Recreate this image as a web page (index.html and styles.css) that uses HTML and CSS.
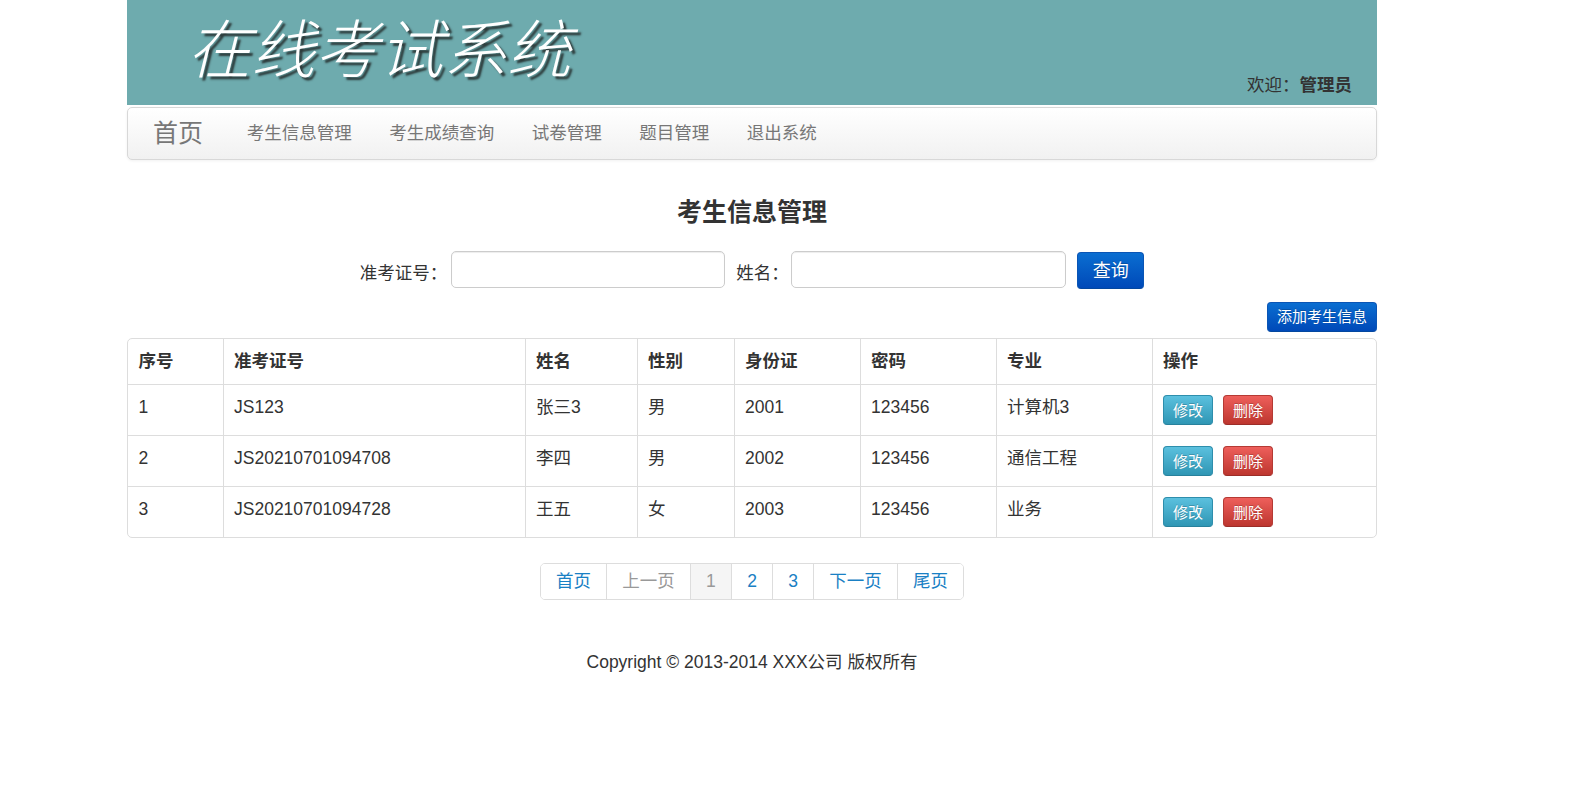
FILE: index.html
```html
<!DOCTYPE html>
<html lang="zh-CN">
<head>
<meta charset="utf-8">
<title>在线考试系统</title>
<link rel="stylesheet" href="styles.css">
</head>
<body>
<div class="page">
  <header class="banner">
    <div class="logo">在线考试系统</div>
    <div class="welcome">欢迎：<b>管理员</b></div>
  </header>
  <nav class="navbar">
    <a class="brand">首页</a>
    <ul class="nav-list">
      <li><a>考生信息管理</a></li>
      <li><a>考生成绩查询</a></li>
      <li><a>试卷管理</a></li>
      <li><a>题目管理</a></li>
      <li><a>退出系统</a></li>
    </ul>
  </nav>
  <h3 class="title">考生信息管理</h3>
  <form class="search">
    <label class="label label-first">准考证号：</label>
    <input class="field" type="text">
    <label class="label label-second">姓名：</label>
    <input class="field field-second" type="text">
    <button class="btn btn-primary btn-query" type="button">查询</button>
  </form>
  <div class="actions">
    <button class="btn btn-primary btn-add" type="button">添加考生信息</button>
  </div>
  <div class="table-wrap">
    <table class="data">
      <thead>
        <tr><th>序号</th><th>准考证号</th><th>姓名</th><th>性别</th><th>身份证</th><th>密码</th><th>专业</th><th>操作</th></tr>
      </thead>
      <tbody>
        <tr><td>1</td><td>JS123</td><td>张三3</td><td>男</td><td>2001</td><td>123456</td><td>计算机3</td><td class="ops"><button class="btn btn-xs btn-info" type="button">修改</button><button class="btn btn-xs btn-danger" type="button">删除</button></td></tr>
        <tr><td>2</td><td>JS20210701094708</td><td>李四</td><td>男</td><td>2002</td><td>123456</td><td>通信工程</td><td class="ops"><button class="btn btn-xs btn-info" type="button">修改</button><button class="btn btn-xs btn-danger" type="button">删除</button></td></tr>
        <tr><td>3</td><td>JS20210701094728</td><td>王五</td><td>女</td><td>2003</td><td>123456</td><td>业务</td><td class="ops"><button class="btn btn-xs btn-info" type="button">修改</button><button class="btn btn-xs btn-danger" type="button">删除</button></td></tr>
      </tbody>
    </table>
  </div>
  <div class="pager-row">
    <ul class="pagination">
      <li><a>首页</a></li>
      <li class="disabled"><a>上一页</a></li>
      <li class="active"><a>1</a></li>
      <li><a>2</a></li>
      <li><a>3</a></li>
      <li><a>下一页</a></li>
      <li><a>尾页</a></li>
    </ul>
  </div>
  <footer class="footer">Copyright © 2013-2014 XXX公司 版权所有</footer>
</div>
</body>
</html>
```
FILE: styles.css
```css
* { box-sizing: border-box; }
html, body { margin: 0; padding: 0; background: #fff; }
body {
  font-family: "Liberation Sans", "Noto Sans CJK SC", sans-serif;
  font-size: 17.5px;
  line-height: 25px;
  color: #333;
}
.page { width: 1250px; margin-left: 127px; }

.banner {
  height: 105px;
  background: #6eabae;
  display: flex;
  justify-content: space-between;
  align-items: flex-end;
  padding: 0 25px 7px 60px;
}
.logo {
  align-self: flex-start;
  margin-top: 10px;
  font-size: 64px;
  line-height: 82px;
  font-weight: 300;
  font-style: italic;
  color: #fff;
  text-shadow: 3px 3px 2px #2c3a3a;
  white-space: nowrap;
}
.welcome b { font-weight: 700; }

.navbar {
  margin-top: 2px;
  height: 53px;
  display: flex;
  align-items: center;
  border: 1px solid #d8d8d8;
  border-radius: 5px;
  background: linear-gradient(to bottom, #fff 0%, #f1f1f1 100%);
  box-shadow: 0 1px 3px rgba(0,0,0,.06);
}
.brand {
  font-size: 25px;
  color: #777;
  padding: 0 25px 0 25px;
}
.nav-list { display: flex; list-style: none; margin: 0; padding: 0; }
.nav-list a { display: block; padding: 0 18.75px; color: #777; }

.title {
  margin: 37px 0 0;
  font-size: 25px;
  line-height: 30px;
  font-weight: 700;
  text-align: center;
}

.search {
  margin-top: 24px;
  display: flex;
  justify-content: center;
  align-items: flex-start;
}
.label { padding-top: 10px; }
.label-first { padding-right: 1px; }
.label-second { margin-left: 11px; }
.field {
  width: 274.5px;
  height: 37px;
  margin-left: 2.5px;
  border: 1px solid #ccc;
  border-radius: 5px;
  background: #fff;
  box-shadow: inset 0 1px 1px rgba(0,0,0,.075);
}
.field-second { width: 275px; }
.btn {
  font-family: inherit;
  color: #fff;
  border: 1px solid transparent;
  border-radius: 4px;
  padding: 0;
  text-shadow: 0 -1px 0 rgba(0,0,0,.2);
}
.btn-primary {
  background: linear-gradient(to bottom, #0a6ed1 0%, #0049b8 100%);
  border-color: #0a55b5 #0a55b5 #04479f;
}
.btn-query {
  width: 67px;
  height: 37px;
  margin: 1px 0 0 11px;
  padding-bottom: 4px;
  font-size: 18px;
}
.actions { margin-top: 13px; display: flex; justify-content: flex-end; }
.btn-add { width: 110px; height: 30px; padding-bottom: 3px; font-size: 15px; }

.table-wrap {
  margin-top: 6px;
  border: 1px solid #ddd;
  border-radius: 5px;
  overflow: hidden;
}
.data { width: 100%; border-collapse: collapse; table-layout: fixed; }
.data th, .data td {
  padding: 10px 10px 10px 10.5px;
  text-align: left;
  vertical-align: top;
  border-left: 1px solid #ddd;
  border-top: 1px solid #ddd;
}
.data th { border-top: 0; font-weight: 700; }
.data th:first-child, .data td:first-child { border-left: 0; }
.data th:nth-child(1) { width: 95px; }
.data th:nth-child(2) { width: 302px; }
.data th:nth-child(3) { width: 112px; }
.data th:nth-child(4) { width: 97px; }
.data th:nth-child(5) { width: 126px; }
.data th:nth-child(6) { width: 136px; }
.data th:nth-child(7) { width: 156px; }
.btn-xs {
  display: inline-block;
  vertical-align: top;
  width: 50px;
  height: 30px;
  padding-bottom: 2px;
  font-size: 15px;
}
.btn-xs + .btn-xs { margin-left: 10px; }
.btn-info {
  background: linear-gradient(to bottom, #5bc0de 0%, #2f96b4 100%);
  border-color: #2e8eac #2e8eac #28819c;
}
.btn-danger {
  background: linear-gradient(to bottom, #ee5f5b 0%, #bd362f 100%);
  border-color: #b53a34 #b53a34 #9c2d28;
}

.pager-row { margin-top: 25px; display: flex; justify-content: center; }
.pagination {
  display: flex;
  list-style: none;
  margin: 0;
  padding: 0;
  border: 1px solid #ddd;
  border-radius: 5px;
  overflow: hidden;
}
.pagination li + li { border-left: 1px solid #ddd; }
.pagination a {
  display: block;
  padding: 5px 15.15px;
  color: #1a80c4;
  background: #fff;
}
.pagination .disabled a { color: #999; }
.pagination .active a { color: #999; background: #f5f5f5; }

.footer {
  margin-top: 50px;
  text-align: center;
}
```
